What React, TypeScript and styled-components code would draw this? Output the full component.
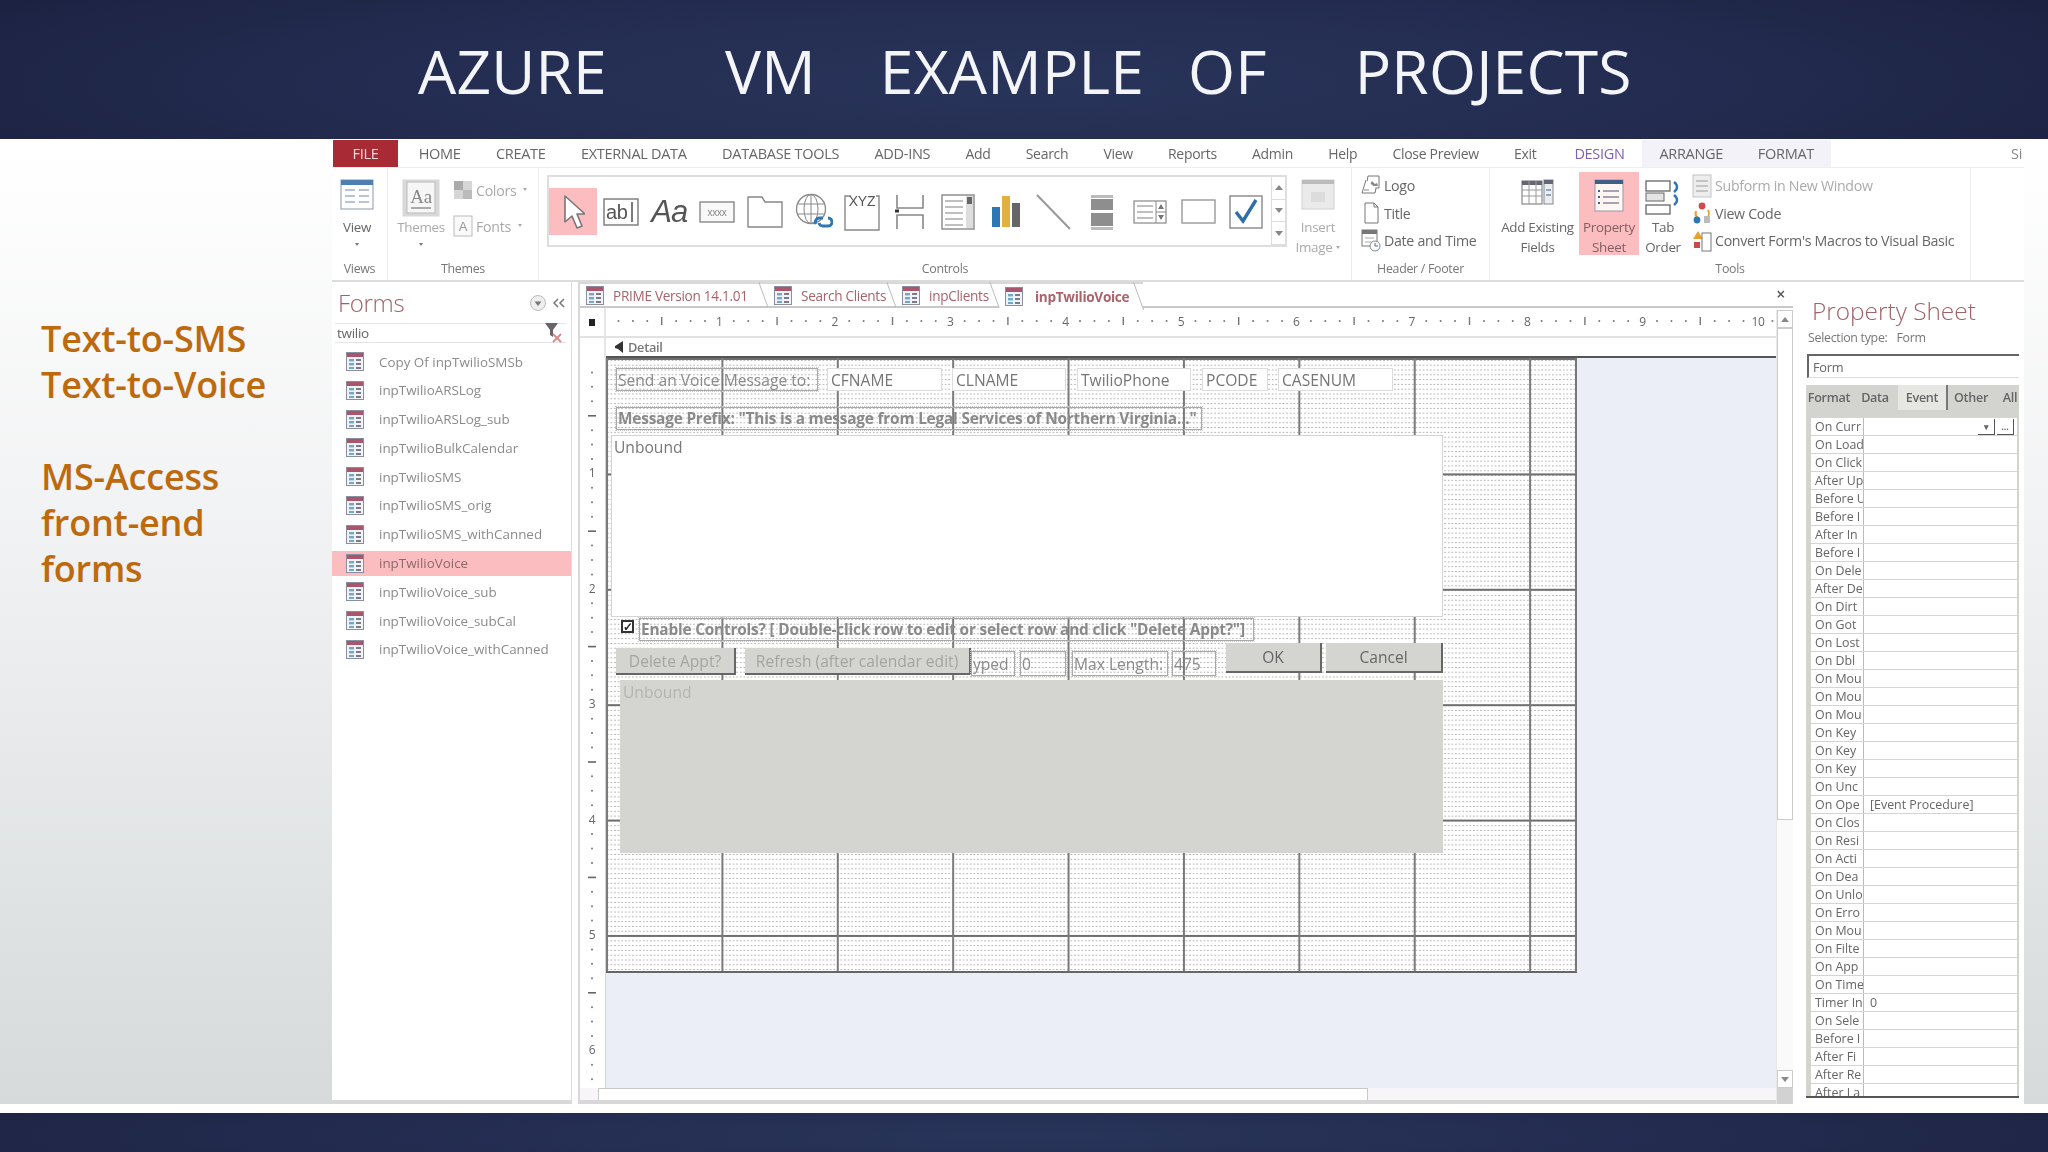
import React from 'react';
import styled, { createGlobalStyle } from 'styled-components';

const Global = createGlobalStyle`
  html, body { margin: 0; padding: 0; }
  body { width: 2048px; height: 1152px; overflow: hidden; background: #fff; font-family: "Open Sans", "Liberation Sans", sans-serif; }
`;

const Page = styled.div`
  width: 2048px;
  height: 1152px;
  display: flex;
  flex-direction: column;
`;

const TitleBar = styled.div`
  height: 139px;
  flex: none;
  display: flex;
  align-items: center;
  padding: 3px 0 0 418px;
  box-sizing: border-box;
  background: radial-gradient(ellipse 60% 120% at 50% 60%, #29345a 0%, #232c50 55%, #1b2140 100%);
  color: #f4f5f8;
  font-size: 60.5px;
  letter-spacing: 0.2px;
  line-height: 1;
`;

const Word = styled.span<{ $gap: number }>`
  margin-right: ${p => p.$gap}px;
`;

const Middle = styled.div`
  height: 965px;
  flex: none;
  display: flex;
  background: linear-gradient(180deg, #ffffff 0%, #f1f2f3 40%, #d6dadb 100%);
`;

const SideText = styled.div`
  width: 332px;
  flex: none;
  box-sizing: border-box;
  padding: 177px 0 0 41px;
  color: #bd6a0e;
  font-size: 36px;
  font-weight: 600;
  line-height: 46px;
  letter-spacing: -0.2px;
`;

const SideGap = styled.div`
  height: 46px;
`;

const AppWindow = styled.div`
  width: 1692px;
  flex: none;
  display: flex;
  flex-direction: column;
  background: #fff;
  color: #666;
  filter: blur(0.7px);
  letter-spacing: -0.3px;
`;

const MenuBar = styled.div`
  height: 29px;
  flex: none;
  display: flex;
  align-items: flex-end;
  box-sizing: border-box;
  padding-left: 1px;
  font-size: 14.5px;
  border-bottom: 1px solid #eee;
`;

const FileTab = styled.div`
  width: 65px;
  height: 27px;
  margin-right: 3px;
  background: #a82a34;
  color: #f1d9da;
  display: flex;
  align-items: center;
  justify-content: center;
`;

const MenuItem = styled.div<{ $active?: boolean; $tool?: boolean; $mixed?: boolean }>`
  height: 27px;
  display: flex;
  align-items: center;
  padding: 0 ${p => (p.$mixed ? 17.6 : p.$tool || p.$active ? 17.4 : 17.7)}px;
  margin-left: ${p => (p.$active ? 3 : 0)}px;
  box-sizing: border-box;
  font-size: ${p => (p.$mixed ? 14 : 14.5)}px;
  color: ${p => (p.$active ? '#8060b0' : '#666')};
  background: ${p => (p.$tool ? '#f3f2f8' : p.$active ? '#fff' : 'transparent')};
`;

const MenuEdge = styled.div`
  margin-left: auto;
  height: 27px;
  display: flex;
  align-items: center;
  padding-right: 2px;
  color: #888;
`;

const Ribbon = styled.div`
  height: 114px;
  flex: none;
  display: flex;
  border-bottom: 2px solid #dcdcdc;
  box-sizing: border-box;
`;

const RibbonGroup = styled.div<{ $w: number; $plain?: boolean }>`
  width: ${p => p.$w}px;
  flex: none;
  display: flex;
  flex-direction: column;
  box-sizing: border-box;
  border-right: ${p => (p.$plain ? 'none' : '1px solid #ececec')};
`;

const GroupBody = styled.div<{ $pad?: number }>`
  height: 88px;
  flex: none;
  display: flex;
  box-sizing: border-box;
  padding: 4px 0 0 ${p => p.$pad ?? 0}px;
`;

const GroupLabel = styled.div`
  text-align: center;
  font-size: 12.4px;
  line-height: 18px;
  padding-top: 4px;
  color: #777;
`;

const LargeButton = styled.div<{ $w: number; $on?: boolean; $off?: boolean; $ml?: number }>`
  width: ${p => p.$w}px;
  height: 83px;
  flex: none;
  margin-left: ${p => p.$ml ?? 0}px;
  padding-top: 7px;
  box-sizing: border-box;
  display: flex;
  flex-direction: column;
  align-items: center;
  text-align: center;
  font-size: 13.4px;
  line-height: 20px;
  color: ${p => (p.$off ? '#aaa' : p.$on ? '#806064' : '#666')};
  background: ${p => (p.$on ? '#fbbdc0' : 'transparent')};
`;

const LargeIcon = styled.div`
  height: 38px;
  flex: none;
  display: flex;
  justify-content: center;
  align-items: flex-start;
`;

const Caret = styled.div`
  width: 0;
  height: 0;
  margin-top: 6px;
  border: 2.5px solid transparent;
  border-top: 3px solid #777;
`;

const InlineCaret = styled.span`
  display: inline-block;
  width: 0;
  height: 0;
  margin-left: 4px;
  vertical-align: middle;
  border: 2.5px solid transparent;
  border-top: 3px solid #aaa;
`;

const SmallList = styled.div<{ $ml?: number; $pitch: number }>`
  margin-left: ${p => p.$ml ?? 0}px;
  display: flex;
  flex-direction: column;
  > * { height: ${p => p.$pitch}px; }
`;

const SmallRow = styled.div<{ $off?: boolean }>`
  display: flex;
  align-items: center;
  gap: 3px;
  font-size: 14.2px;
  white-space: nowrap;
  color: ${p => (p.$off ? '#aaa' : '#666')};
`;

const Gallery = styled.div`
  width: 740px;
  height: 72px;
  flex: none;
  margin-top: 3px;
  box-sizing: border-box;
  display: flex;
  border: 2px solid #dedede;
  border-right: none;
`;

const GalleryRow = styled.div`
  width: 722px;
  flex: none;
  display: flex;
  padding-top: 11px;
`;

const GalleryCell = styled.div<{ $on?: boolean }>`
  width: 48.1px;
  height: 47px;
  flex: none;
  display: flex;
  align-items: center;
  justify-content: center;
  background: ${p => (p.$on ? '#fbbdc0' : 'transparent')};
`;

const BigAa = styled.span`
  font-family: "Liberation Sans", sans-serif;
  font-style: italic;
  font-size: 31px;
  letter-spacing: -1px;
  color: #555;
`;

const GalleryScroll = styled.div`
  flex: 1;
  display: flex;
  flex-direction: column;
  border-left: 1px solid #ddd;
  border-right: 2px solid #dedede;
`;

const ScrollStep = styled.div<{ $size: number }>`
  flex: ${p => p.$size};
  display: flex;
  align-items: center;
  justify-content: center;
  border-bottom: 1px solid #ddd;
  color: #777;
  font-size: 8px;
`;

const Workspace = styled.div`
  flex: 1;
  display: flex;
  min-height: 0;
`;

const NavPane = styled.div`
  width: 240px;
  flex: none;
  display: flex;
  flex-direction: column;
  box-sizing: border-box;
  border-right: 1px solid #ddd;
  border-bottom: 4px solid #d8d8d8;
`;

const NavHead = styled.div`
  height: 41px;
  flex: none;
  display: flex;
  align-items: center;
  padding-left: 6px;
  gap: 6px;
  color: #a06268;
  font-size: 24px;
  font-weight: 300;
  box-sizing: border-box;
`;

const NavTitle = styled.span`
  flex: 1;
`;

const NavSearch = styled.div`
  height: 20px;
  margin: 0 5px 0 3px;
  flex: none;
  display: flex;
  align-items: center;
  justify-content: space-between;
  padding: 0 2px;
  box-sizing: border-box;
  border-top: 1px solid #e4e4e4;
  border-bottom: 1px solid #e4e4e4;
  font-size: 13.5px;
  color: #666;
`;

const NavList = styled.div`
  margin-top: 6px;
  display: flex;
  flex-direction: column;
  gap: 3.8px;
`;

const NavRow = styled.div<{ $on?: boolean }>`
  height: 25px;
  display: flex;
  align-items: center;
  gap: 15px;
  padding-left: 14px;
  font-size: 13.4px;
  letter-spacing: 0;
  color: ${p => (p.$on ? '#8d6a6c' : '#8b8b8b')};
  background: ${p => (p.$on ? '#fbbdc0' : 'transparent')};
`;

const Splitter = styled.div`
  width: 8px;
  flex: none;
  border-right: 2px solid #d8d8d8;
  box-sizing: border-box;
`;

const DocArea = styled.div`
  width: 1213px;
  flex: none;
  display: flex;
  flex-direction: column;
`;

const TabStrip = styled.div`
  height: 26px;
  flex: none;
  display: flex;
  align-items: stretch;
`;

const DocTab = styled.div<{ $w: number; $on?: boolean }>`
  width: ${p => p.$w}px;
  flex: none;
  position: relative;
  display: flex;
  align-items: center;
  gap: ${p => (p.$on ? 12 : 9)}px;
  padding-left: 6px;
  box-sizing: border-box;
  font-size: 13.6px;
  font-weight: ${p => (p.$on ? 700 : 400)};
  color: #a8636b;
  border-bottom: ${p => (p.$on ? 'none' : '2px solid #c8c8c8')};
  border-top: 2px solid #d8d8d8;
  &::after {
    content: '';
    position: absolute;
    right: 4px;
    top: -2px;
    bottom: -2px;
    border-right: 1px solid #bbb;
    transform: skewX(20deg);
  }
`;

const TabFill = styled.div`
  flex: 1;
  display: flex;
  justify-content: flex-end;
  align-items: center;
  padding-right: 8px;
  border-bottom: 2px solid #c8c8c8;
  color: #555;
  font-size: 16px;
  font-weight: 600;
`;

const DesignWrap = styled.div`
  flex: 1;
  display: flex;
  min-height: 0;
`;

const DesignColumn = styled.div`
  width: 1196px;
  flex: none;
  display: flex;
  flex-direction: column;
`;

const RulerRow = styled.div`
  height: 30px;
  flex: none;
  display: flex;
  border-bottom: 2px solid #e2e2e2;
  box-sizing: border-box;
`;

const Corner = styled.div`
  width: 26px;
  flex: none;
  display: flex;
  align-items: center;
  justify-content: center;
  border-right: 2px solid #e6e6e6;
  box-sizing: border-box;
`;

const CornerMark = styled.div`
  width: 6px;
  height: 7px;
  background: #222;
`;

const DetailRow = styled.div`
  height: 20px;
  flex: none;
  display: flex;
`;

const DetailBar = styled.div`
  flex: 1;
  display: flex;
  align-items: center;
  gap: 4px;
  padding-left: 8px;
  font-size: 12.8px;
  font-weight: 600;
  color: #777;
  border-bottom: 2px solid #555;
`;

const CanvasRow = styled.div`
  flex: 1;
  display: flex;
  min-height: 0;
`;

const VRulerBox = styled.div`
  width: 26px;
  flex: none;
  border-right: 1px solid #d4d4d4;
  box-sizing: border-box;
`;

const Surface = styled.div`
  flex: 1;
  background: #eceef7;
`;

const FormCanvas = styled.div`
  position: relative;
  width: 971px;
  height: 615px;
  box-sizing: border-box;
  border-right: 2px solid #777;
  border-bottom: 2px solid #666;
  background-color: #fff;
  background-image:
    linear-gradient(90deg, #7a7a7a 2px, transparent 2px),
    linear-gradient(180deg, #6e6e6e 1.5px, transparent 1.5px),
    radial-gradient(circle, #b4b4b4 0.75px, transparent 1.05px);
  background-size: 115.4px 100%, 100% 115.4px, 3.6px 4.8px;
  letter-spacing: 0;
`;

const Control = styled.div<{ $x: number; $y: number; $w: number; $h: number }>`
  position: absolute;
  left: ${p => p.$x}px;
  top: ${p => p.$y}px;
  width: ${p => p.$w}px;
  height: ${p => p.$h}px;
  box-sizing: border-box;
  display: flex;
  align-items: center;
  white-space: nowrap;
  font-size: 15.6px;
`;

const LabelBox = styled(Control)<{ $bold?: boolean }>`
  border: 1px solid #a8a8a8;
  outline: 1px dotted #c8c8c8;
  padding-left: 1px;
  color: #8a8a8a;
  font-weight: ${p => (p.$bold ? 700 : 400)};
  font-size: ${p => (p.$bold ? 15.4 : 15.6)}px;
  letter-spacing: ${p => (p.$bold ? -0.2 : 0)}px;
`;

const FieldBox = styled(Control)`
  background: #fff;
  border: 1px solid #dcdcdc;
  padding-left: 3px;
  color: #757575;
`;

const MemoBox = styled(Control)`
  background: #fff;
  border: 1px solid #d4d4d4;
  align-items: flex-start;
  padding: 0 0 0 2px;
  color: #777;
`;

const FormButton = styled(Control)<{ $dim?: boolean }>`
  justify-content: center;
  background: #d4d4d0;
  border-right: 2px solid #666;
  border-bottom: 2px solid #666;
  color: ${p => (p.$dim ? '#a4a4a0' : '#666')};
`;

const Plate = styled(Control)`
  background: #d4d4d0;
  align-items: flex-start;
  padding: 1px 0 0 3px;
  color: #b4b4b0;
`;

const CheckMark = styled(Control)`
  background: #fff;
  border: 2px solid #333;
  color: #222;
  font-size: 12px;
  font-weight: 700;
  justify-content: center;
  line-height: 1;
`;

const HScroll = styled.div`
  height: 12px;
  flex: none;
  display: flex;
  background: #f7f5f7;
  border-bottom: 4px solid #d8d8d8;
`;

const HThumb = styled.div`
  width: 770px;
  margin-left: 18px;
  background: #fff;
  border: 1px solid #c8c8c8;
  border-bottom: none;
  box-sizing: border-box;
`;

const VScroll = styled.div`
  width: 17px;
  flex: none;
  margin-top: 2px;
  display: flex;
  flex-direction: column;
  background: #fbfafb;
  border-left: 1px solid #e8e8e8;
  box-sizing: border-box;
`;

const ScrollBtn = styled.div`
  height: 18px;
  flex: none;
  display: flex;
  align-items: center;
  justify-content: center;
  border: 1px solid #ccc;
  box-sizing: border-box;
  color: #666;
  font-size: 8px;
  background: #fff;
`;

const VThumb = styled.div`
  height: 492px;
  flex: none;
  background: #fff;
  border: 1px solid #ccc;
  box-sizing: border-box;
`;

const VTrack = styled.div`
  flex: 1;
`;

const VCornerFill = styled.div`
  height: 16px;
  flex: none;
  background: #d2d2d2;
`;

const PropPane = styled.div`
  width: 222px;
  margin-left: 4px;
  flex: none;
  display: flex;
  flex-direction: column;
  overflow: hidden;
`;

const PropTitle = styled.div`
  height: 42px;
  flex: none;
  box-sizing: border-box;
  padding: 11px 0 0 15px;
  font-size: 24.4px;
  font-weight: 300;
  line-height: 36px;
  color: #a06268;
  letter-spacing: 0;
`;

const SelectionLine = styled.div`
  height: 26px;
  flex: none;
  display: flex;
  align-items: center;
  gap: 9px;
  padding-left: 11px;
  font-size: 12.4px;
  color: #777;
`;

const PropCombo = styled.div`
  height: 24px;
  margin: 4px 0 0 10px;
  flex: none;
  display: flex;
  align-items: center;
  padding-left: 4px;
  box-sizing: border-box;
  border-top: 2px solid #666;
  border-left: 2px solid #666;
  border-bottom: 1px solid #ddd;
  font-size: 12.8px;
  color: #666;
`;

const PropFrame = styled.div`
  margin: 7px 0 6px 9px;
  flex: 1;
  min-height: 0;
  display: flex;
  flex-direction: column;
  background: #d3d3cf;
  border-bottom: 2px solid #555;
`;

const PropTabs = styled.div`
  height: 25px;
  flex: none;
  display: flex;
  align-items: center;
  font-size: 12.6px;
  font-weight: 600;
  color: #666;
`;

const PropTab = styled.div<{ $w: number; $on?: boolean }>`
  width: ${p => p.$w}px;
  height: 25px;
  flex: none;
  display: flex;
  align-items: center;
  justify-content: center;
  background: ${p => (p.$on ? '#e6e6e2' : 'transparent')};
  border-right: ${p => (p.$on ? '2px solid #777' : 'none')};
  box-sizing: border-box;
`;

const PropGrid = styled.div`
  margin: 8px 2px 0 5px;
  flex: 1;
  min-height: 0;
  overflow: hidden;
  background: #fff;
`;

const PropRow = styled.div`
  height: 18px;
  display: grid;
  grid-template-columns: 53px 1fr;
  box-sizing: border-box;
  border-bottom: 1px solid #d4d4d4;
  font-size: 12.4px;
  line-height: 17px;
  letter-spacing: 0;
  color: #666;
`;

const PropName = styled.div`
  overflow: hidden;
  white-space: nowrap;
  padding-left: 4px;
  border-right: 1px solid #bbb;
`;

const PropValue = styled.div`
  display: flex;
  align-items: center;
  justify-content: space-between;
  padding-left: 6px;
`;

const ValueButtons = styled.div`
  display: flex;
  gap: 2px;
  margin-right: 3px;
  font-size: 9px;
  line-height: 15px;
  font-weight: 700;
`;

const ValueButton = styled.span`
  width: 16px;
  text-align: center;
  border-right: 1px solid #555;
  border-bottom: 1px solid #555;
`;

const BottomStrip = styled.div`
  height: 9px;
  flex: none;
  background: #fff;
`;

const FooterBar = styled.div`
  flex: 1;
  background: radial-gradient(ellipse 60% 200% at 50% 60%, #29345a 0%, #222b4e 60%, #1d2241 100%);
`;

const ChevronUp = () => (
  <svg width="8" height="5" viewBox="0 0 8 5"><path d="M0 5 4 0l4 5z" fill="#888" /></svg>
);
const ChevronDown = () => (
  <svg width="8" height="5" viewBox="0 0 8 5"><path d="M0 0h8L4 5z" fill="#888" /></svg>
);

const ViewIcon = () => (
  <svg width="34" height="31" viewBox="0 0 34 31">
    <rect x="1" y="1" width="32" height="29" fill="#fff" stroke="#8a97a6" />
    <rect x="1" y="1" width="32" height="5" fill="#4f7fb0" />
    <path d="M5 11h10M19 11h10M5 17h10M19 17h10M5 23h10M19 23h10" stroke="#b8c4cf" strokeWidth="2" />
  </svg>
);

const ThemesIcon = () => (
  <svg width="38" height="38" viewBox="0 0 38 38">
    <rect x="0.5" y="0.5" width="37" height="37" fill="#d8d8d8" />
    <rect x="5" y="3" width="28" height="31" fill="#f6f6f6" stroke="#bbb" />
    <text x="19" y="24" textAnchor="middle" fontSize="19" fontFamily="Liberation Serif, serif" fill="#888">Aa</text>
    <path d="M9 29h20" stroke="#aaa" strokeWidth="2" />
  </svg>
);

const SwatchIcon = () => (
  <svg width="20" height="20" viewBox="0 0 20 20">
    <rect x="1" y="1" width="18" height="18" fill="#d6d6d6" />
    <rect x="1" y="1" width="9" height="9" fill="#aaa" />
    <rect x="10" y="10" width="9" height="9" fill="#bbb" />
  </svg>
);

const FontsIcon = () => (
  <svg width="20" height="22" viewBox="0 0 20 22">
    <rect x="1" y="1" width="18" height="20" fill="#fafafa" stroke="#bbb" />
    <text x="10" y="16" textAnchor="middle" fontSize="13" fontFamily="Liberation Sans, sans-serif" fill="#999">A</text>
  </svg>
);

const PointerIcon = () => (
  <svg width="24" height="36" viewBox="0 0 24 36">
    <path d="M4 2v26l7-6 5 12 5-2-5-12h8z" fill="#fff" stroke="#777" strokeWidth="1.6" strokeLinejoin="round" />
  </svg>
);

const TextBoxIcon = () => (
  <svg width="36" height="28" viewBox="0 0 36 28">
    <rect x="1" y="1" width="34" height="26" fill="#fff" stroke="#777" strokeWidth="1.4" />
    <text x="3" y="21" fontSize="20" fontFamily="Liberation Sans, sans-serif" fill="#555">ab</text>
    <path d="M29 4v20" stroke="#444" strokeWidth="1.4" />
  </svg>
);

const ButtonIcon = () => (
  <svg width="36" height="22" viewBox="0 0 36 22">
    <rect x="1" y="1" width="34" height="20" fill="#f8f8f8" stroke="#888" strokeWidth="1.4" />
    <text x="18" y="15" textAnchor="middle" fontSize="10" fontFamily="Liberation Sans, sans-serif" fill="#888">xxxx</text>
  </svg>
);

const FolderIcon = () => (
  <svg width="36" height="33" viewBox="0 0 36 33">
    <path d="M1 32V2h14l3 5h17v25z" fill="#fff" stroke="#888" strokeWidth="1.4" />
    <path d="M15 2l3 5" stroke="#888" />
  </svg>
);

const GlobeIcon = () => (
  <svg width="38" height="38" viewBox="0 0 38 38">
    <circle cx="16" cy="16" r="14.5" fill="#fff" stroke="#888" strokeWidth="1.3" />
    <ellipse cx="16" cy="16" rx="7" ry="14.5" fill="none" stroke="#888" />
    <path d="M16 1.5v29M2 11h28M2 21h28" stroke="#888" />
    <path d="M21 31a4 4 0 0 1 4-6h3M33 25a4 4 0 0 1 0 8h-5a4 4 0 0 1-4-3" fill="none" stroke="#2f76b5" strokeWidth="3" />
  </svg>
);

const FrameIcon = () => (
  <svg width="36" height="38" viewBox="0 0 36 38">
    <path d="M7 3H1v34h34V3h-3" fill="#fff" stroke="#888" strokeWidth="1.4" />
    <text x="18" y="13" textAnchor="middle" fontSize="14" fontFamily="Liberation Sans, sans-serif" fill="#555">XYZ</text>
  </svg>
);

const PageBreakIcon = () => (
  <svg width="30" height="36" viewBox="0 0 30 36">
    <path d="M2 1v13h26V1M2 35V21h26v14" fill="none" stroke="#888" strokeWidth="1.6" />
    <path d="M0 17h4" stroke="#333" strokeWidth="3" />
  </svg>
);

const SubformIcon = () => (
  <svg width="34" height="36" viewBox="0 0 34 36">
    <rect x="1" y="1" width="32" height="34" fill="#fff" stroke="#888" strokeWidth="1.4" />
    <rect x="25" y="2" width="7" height="32" fill="#ddd" />
    <rect x="26" y="3" width="5" height="7" fill="#666" />
    <path d="M4 7h18M4 13h18M4 19h18M4 25h18M4 31h18" stroke="#aaa" strokeWidth="1.5" />
  </svg>
);

const ChartIcon = () => (
  <svg width="30" height="33" viewBox="0 0 30 33">
    <rect x="1" y="12" width="8" height="20" fill="#2f76b5" />
    <rect x="11" y="1" width="8" height="31" fill="#e0b040" />
    <rect x="21" y="8" width="8" height="24" fill="#666" />
  </svg>
);

const LineIcon = () => (
  <svg width="36" height="36" viewBox="0 0 36 36"><path d="M1 1l33 34" stroke="#999" strokeWidth="2" /></svg>
);

const DividerIcon = () => (
  <svg width="24" height="36" viewBox="0 0 24 36">
    <rect x="1" y="1" width="22" height="3" fill="#bbb" />
    <rect x="1" y="5" width="22" height="11" fill="#8e8e8e" />
    <rect x="1" y="19" width="22" height="13" fill="#8e8e8e" />
    <rect x="1" y="33" width="22" height="3" fill="#bbb" />
  </svg>
);

const ListIcon = () => (
  <svg width="34" height="24" viewBox="0 0 34 24">
    <rect x="1" y="1" width="32" height="22" fill="#fff" stroke="#888" strokeWidth="1.2" />
    <path d="M4 6h16M4 12h16M4 18h16" stroke="#aaa" strokeWidth="1.5" />
    <path d="M23 1v22M23 12h10" stroke="#888" />
    <path d="M25 9l3-5 3 5zM25 15l3 5 3-5z" fill="#777" />
  </svg>
);

const RectIcon = () => (
  <svg width="35" height="25" viewBox="0 0 35 25"><rect x="1" y="1" width="33" height="23" fill="#fff" stroke="#999" strokeWidth="1.4" /></svg>
);

const CheckIcon = () => (
  <svg width="34" height="34" viewBox="0 0 34 34">
    <rect x="1" y="1" width="32" height="32" fill="#fff" stroke="#888" strokeWidth="1.4" />
    <path d="M7 17l7 9L27 5" fill="none" stroke="#2f6fa8" strokeWidth="3.4" />
  </svg>
);

const InsertImageIcon = () => (
  <svg width="34" height="31" viewBox="0 0 34 31">
    <rect x="1" y="1" width="32" height="29" fill="#eaeaea" stroke="#d0d0d0" />
    <rect x="1" y="1" width="32" height="4" fill="#bbb" />
    <rect x="10" y="13" width="14" height="10" fill="#dcdcdc" />
  </svg>
);

const LogoIcon = () => (
  <svg width="20" height="22" viewBox="0 0 20 22">
    <path d="M7 1h11v12H5z" fill="#fff" stroke="#777" />
    <path d="M8 11l3-5 3 3 2-1 1 3z" fill="#888" />
    <path d="M5 5 1 18h13l1-5" fill="#fff" stroke="#777" />
    <path d="M3 15h5" stroke="#888" />
  </svg>
);

const TitleIcon = () => (
  <svg width="20" height="22" viewBox="0 0 20 22">
    <path d="M4 1h9l4 4v16H4z" fill="#fff" stroke="#777" />
    <path d="M13 1v4h4" fill="none" stroke="#777" />
  </svg>
);

const DateIcon = () => (
  <svg width="20" height="24" viewBox="0 0 20 24">
    <rect x="1" y="1" width="15" height="16" fill="#fff" stroke="#777" />
    <rect x="1" y="1" width="15" height="4" fill="#777" />
    <path d="M4 9h9M4 13h9" stroke="#aaa" />
    <circle cx="14" cy="17" r="5" fill="#fff" stroke="#888" />
    <path d="M14 14v3h3" fill="none" stroke="#2f76b5" />
  </svg>
);

const FieldsIcon = () => (
  <svg width="33" height="26" viewBox="0 0 33 26">
    <rect x="1" y="2" width="20" height="23" fill="#fff" stroke="#888" strokeWidth="1.2" />
    <rect x="1" y="2" width="20" height="4" fill="#667" />
    <path d="M8 2v23M15 2v23M1 11h20M1 17h20" stroke="#999" />
    <rect x="23" y="1" width="9" height="24" fill="#e8eef4" stroke="#888" />
    <rect x="23" y="1" width="9" height="4" fill="#667" />
    <path d="M25 11h5M25 16h5" stroke="#7a8fa5" strokeWidth="1.5" />
  </svg>
);

const PropertyIcon = () => (
  <svg width="30" height="33" viewBox="0 0 30 33">
    <rect x="1" y="1" width="28" height="31" fill="#fdf6f2" stroke="#99a" />
    <rect x="1" y="1" width="28" height="4" fill="#3d5f8a" />
    <path d="M9 12h16M9 18h16M9 24h16" stroke="#889" strokeWidth="1.4" />
    <path d="M4 12h2M4 18h2M4 24h2" stroke="#3d5f8a" strokeWidth="2" />
  </svg>
);

const TabOrderIcon = () => (
  <svg width="36" height="36" viewBox="0 0 36 36">
    <rect x="1" y="2" width="24" height="10" fill="#fff" stroke="#666" strokeWidth="1.3" />
    <rect x="1" y="14" width="18" height="8" fill="#e4e4e4" stroke="#666" />
    <rect x="1" y="26" width="24" height="9" fill="#fff" stroke="#666" strokeWidth="1.3" />
    <path d="M29 3c4 3 4 7 0 10M29 16c4 3 4 7 0 10" fill="none" stroke="#2f76b5" strokeWidth="2.4" />
  </svg>
);

const SubformWinIcon = () => (
  <svg width="20" height="24" viewBox="0 0 20 24">
    <rect x="1" y="1" width="18" height="22" fill="#ededed" stroke="#c4c4c4" />
    <path d="M4 7h12M4 12h12M4 17h12" stroke="#c4c4c4" strokeWidth="2" />
  </svg>
);

const CodeIcon = () => (
  <svg width="20" height="24" viewBox="0 0 20 24">
    <circle cx="10" cy="5" r="3.4" fill="#d24a4a" />
    <path d="M4 10a7 7 0 0 0 3 8M16 9a7 7 0 0 1-2 9" fill="none" stroke="#e8a030" strokeWidth="2" />
    <circle cx="5" cy="19" r="3.4" fill="#2f76b5" />
    <rect x="12" y="15" width="6" height="7" fill="#bbb" />
  </svg>
);

const ConvertIcon = () => (
  <svg width="20" height="24" viewBox="0 0 20 24">
    <path d="M1 10l5-8 5 8z" fill="#e8a030" />
    <rect x="10" y="4" width="9" height="18" fill="#fff" stroke="#777" />
    <rect x="2" y="13" width="6" height="6" fill="#c94a4a" />
  </svg>
);

const NavMenuIcon = () => (
  <svg width="18" height="18" viewBox="0 0 18 18">
    <circle cx="9" cy="9" r="7.5" fill="#eee" stroke="#bbb" />
    <path d="M5.5 7.5h7L9 12z" fill="#777" />
  </svg>
);

const CollapseIcon = () => (
  <svg width="12" height="10" viewBox="0 0 12 10">
    <path d="M5 1 1 5l4 4M11 1 7 5l4 4" fill="none" stroke="#777" strokeWidth="1.5" />
  </svg>
);

const FilterClearIcon = () => (
  <svg width="20" height="22" viewBox="0 0 20 22">
    <path d="M1 1h13L9 8v7L6 13V8z" fill="#666" />
    <path d="M9 12l8 8M17 12l-8 8" stroke="#d88" strokeWidth="1.8" />
  </svg>
);

const FormIcon = () => (
  <svg width="18" height="19" viewBox="0 0 18 19">
    <rect x="0.5" y="0.5" width="17" height="18" fill="#f0f2f6" stroke="#8a8ea0" />
    <rect x="1" y="1" width="16" height="4" fill="#a8566c" />
    <rect x="3" y="7" width="5" height="2.4" fill="#6fa8c8" />
    <rect x="3" y="11" width="5" height="2.4" fill="#6fa8c8" />
    <rect x="3" y="15" width="5" height="2" fill="#6fa8c8" />
    <path d="M10 8h5M10 12h5M10 16h5" stroke="#556" strokeWidth="1.4" />
  </svg>
);

const SectionMark = () => (
  <svg width="10" height="12" viewBox="0 0 10 12"><path d="M9 0 1 5v2l3 1 5 4z" fill="#333" /></svg>
);

const INCH = 115.4;

const HRuler = () => {
  const ticks = Array.from({ length: 83 }, (_, i) => i + 1);
  return (
    <svg width="1170" height="28" viewBox="0 0 1170 28">
      {ticks.map(i => {
        const x = -2 + (i * INCH) / 8;
        if (i % 8 === 0) {
          return (
            <text key={i} x={x} y="18" textAnchor="middle" fontSize="12" fontFamily="Open Sans, sans-serif" fill="#666">
              {i / 8}
            </text>
          );
        }
        if (i % 4 === 0) return <rect key={i} x={x - 0.7} y="9" width="1.4" height="8" fill="#777" />;
        return <circle key={i} cx={x} cy="13" r="1" fill="#777" />;
      })}
    </svg>
  );
};

const VRuler = () => {
  const ticks = Array.from({ length: 50 }, (_, i) => i + 1);
  return (
    <svg width="25" height="730" viewBox="0 0 25 730">
      {ticks.map(i => {
        const y = (i * INCH) / 8;
        if (i % 8 === 0) {
          return (
            <text key={i} x="12" y={y + 4} textAnchor="middle" fontSize="12" fontFamily="Open Sans, sans-serif" fill="#666">
              {i / 8}
            </text>
          );
        }
        if (i % 4 === 0) return <rect key={i} x="8" y={y - 0.7} width="8" height="1.6" fill="#666" />;
        return <circle key={i} cx="12" cy={y} r="1" fill="#777" />;
      })}
    </svg>
  );
};

const MENU_CAPS = ['HOME', 'CREATE', 'EXTERNAL DATA', 'DATABASE TOOLS', 'ADD-INS'];
const MENU_MIXED = ['Add', 'Search', 'View', 'Reports', 'Admin', 'Help', 'Close Preview', 'Exit'];

const FORMS = [
  'Copy Of inpTwilioSMSb',
  'inpTwilioARSLog',
  'inpTwilioARSLog_sub',
  'inpTwilioBulkCalendar',
  'inpTwilioSMS',
  'inpTwilioSMS_orig',
  'inpTwilioSMS_withCanned',
  'inpTwilioVoice',
  'inpTwilioVoice_sub',
  'inpTwilioVoice_subCal',
  'inpTwilioVoice_withCanned',
];

const GALLERY = [PointerIcon, TextBoxIcon, null, ButtonIcon, FolderIcon, GlobeIcon, FrameIcon, PageBreakIcon, SubformIcon, ChartIcon, LineIcon, DividerIcon, ListIcon, RectIcon, CheckIcon];

const PROPS = ['On Curr', 'On Load', 'On Click', 'After Up', 'Before U', 'Before I', 'After In', 'Before I', 'On Dele', 'After De', 'On Dirt', 'On Got', 'On Lost', 'On Dbl', 'On Mou', 'On Mou', 'On Mou', 'On Key', 'On Key', 'On Key', 'On Unc', 'On Ope', 'On Clos', 'On Resi', 'On Acti', 'On Dea', 'On Unlo', 'On Erro', 'On Mou', 'On Filte', 'On App', 'On Time', 'Timer In', 'On Sele', 'Before I', 'After Fi', 'After Re', 'After La'];

export default function App() {
  return (
    <Page>
      <Global />
      <TitleBar>
        <Word $gap={118}>AZURE</Word>
        <Word $gap={64}>VM</Word>
        <Word $gap={44}>EXAMPLE</Word>
        <Word $gap={88}>OF</Word>
        <Word $gap={0}>PROJECTS</Word>
      </TitleBar>

      <Middle>
        <SideText>
          <div>Text-to-SMS</div>
          <div>Text-to-Voice</div>
          <SideGap />
          <div>MS-Access</div>
          <div>front-end</div>
          <div>forms</div>
        </SideText>

        <AppWindow>
          <MenuBar>
            <FileTab>FILE</FileTab>
            {MENU_CAPS.map(m => (
              <MenuItem key={m}>{m}</MenuItem>
            ))}
            {MENU_MIXED.map(m => (
              <MenuItem key={m} $mixed>{m}</MenuItem>
            ))}
            <MenuItem $active>DESIGN</MenuItem>
            <MenuItem $tool>ARRANGE</MenuItem>
            <MenuItem $tool>FORMAT</MenuItem>
            <MenuEdge>Si</MenuEdge>
          </MenuBar>

          <Ribbon>
            <RibbonGroup $w={56}>
              <GroupBody>
                <LargeButton $w={50}>
                  <LargeIcon><ViewIcon /></LargeIcon>
                  View
                  <Caret />
                </LargeButton>
              </GroupBody>
              <GroupLabel>Views</GroupLabel>
            </RibbonGroup>

            <RibbonGroup $w={151}>
              <GroupBody $pad={6}>
                <LargeButton $w={54} $off>
                  <LargeIcon><ThemesIcon /></LargeIcon>
                  Themes
                  <Caret />
                </LargeButton>
                <SmallList $ml={5} $pitch={36}>
                  <SmallRow $off><SwatchIcon />Colors<InlineCaret /></SmallRow>
                  <SmallRow $off><FontsIcon />Fonts<InlineCaret /></SmallRow>
                </SmallList>
              </GroupBody>
              <GroupLabel>Themes</GroupLabel>
            </RibbonGroup>

            <RibbonGroup $w={813}>
              <GroupBody $pad={8}>
                <Gallery>
                  <GalleryRow>
                    {GALLERY.map((Icon, i) => (
                      <GalleryCell key={i} $on={i === 0}>
                        {Icon ? <Icon /> : <BigAa>Aa</BigAa>}
                      </GalleryCell>
                    ))}
                  </GalleryRow>
                  <GalleryScroll>
                    <ScrollStep $size={1}><ChevronUp /></ScrollStep>
                    <ScrollStep $size={1}><ChevronDown /></ScrollStep>
                    <ScrollStep $size={1}><ChevronDown /></ScrollStep>
                  </GalleryScroll>
                </Gallery>
                <LargeButton $w={48} $ml={7} $off>
                  <LargeIcon><InsertImageIcon /></LargeIcon>
                  Insert
                  <div>Image<InlineCaret /></div>
                </LargeButton>
              </GroupBody>
              <GroupLabel>Controls</GroupLabel>
            </RibbonGroup>

            <RibbonGroup $w={138}>
              <GroupBody $pad={9}>
                <SmallList $pitch={27.5}>
                  <SmallRow><LogoIcon />Logo</SmallRow>
                  <SmallRow><TitleIcon />Title</SmallRow>
                  <SmallRow><DateIcon />Date and Time</SmallRow>
                </SmallList>
              </GroupBody>
              <GroupLabel>Header / Footer</GroupLabel>
            </RibbonGroup>

            <RibbonGroup $w={481}>
              <GroupBody $pad={6}>
                <LargeButton $w={83}>
                  <LargeIcon><FieldsIcon /></LargeIcon>
                  Add Existing
                  <div>Fields</div>
                </LargeButton>
                <LargeButton $w={60} $on>
                  <LargeIcon><PropertyIcon /></LargeIcon>
                  Property
                  <div>Sheet</div>
                </LargeButton>
                <LargeButton $w={48}>
                  <LargeIcon><TabOrderIcon /></LargeIcon>
                  Tab
                  <div>Order</div>
                </LargeButton>
                <SmallList $ml={5} $pitch={27.5}>
                  <SmallRow $off><SubformWinIcon />Subform in New Window</SmallRow>
                  <SmallRow><CodeIcon />View Code</SmallRow>
                  <SmallRow><ConvertIcon />Convert Form's Macros to Visual Basic</SmallRow>
                </SmallList>
              </GroupBody>
              <GroupLabel>Tools</GroupLabel>
            </RibbonGroup>
          </Ribbon>

          <Workspace>
            <NavPane>
              <NavHead>
                <NavTitle>Forms</NavTitle>
                <NavMenuIcon />
                <CollapseIcon />
                <span />
              </NavHead>
              <NavSearch>
                twilio
                <FilterClearIcon />
              </NavSearch>
              <NavList>
                {FORMS.map(f => (
                  <NavRow key={f} $on={f === 'inpTwilioVoice'}>
                    <FormIcon />
                    {f}
                  </NavRow>
                ))}
              </NavList>
            </NavPane>
            <Splitter />

            <DocArea>
              <TabStrip>
                <DocTab $w={188}><FormIcon />PRIME Version 14.1.01</DocTab>
                <DocTab $w={128}><FormIcon />Search Clients</DocTab>
                <DocTab $w={103}><FormIcon />inpClients</DocTab>
                <DocTab $w={144} $on><FormIcon />inpTwilioVoice</DocTab>
                <TabFill>×</TabFill>
              </TabStrip>

              <DesignWrap>
                <DesignColumn>
                  <RulerRow>
                    <Corner><CornerMark /></Corner>
                    <HRuler />
                  </RulerRow>
                  <DetailRow>
                    <Corner />
                    <DetailBar><SectionMark />Detail</DetailBar>
                  </DetailRow>
                  <CanvasRow>
                    <VRulerBox><VRuler /></VRulerBox>
                    <Surface>
                      <FormCanvas>
                        <LabelBox $x={10} $y={10} $w={202} $h={23}>Send an Voice Message to:</LabelBox>
                        <FieldBox $x={221} $y={10} $w={115} $h={23}>CFNAME</FieldBox>
                        <FieldBox $x={346} $y={10} $w={114} $h={23}>CLNAME</FieldBox>
                        <FieldBox $x={471} $y={10} $w={114} $h={23}>TwilioPhone</FieldBox>
                        <FieldBox $x={596} $y={10} $w={66} $h={23}>PCODE</FieldBox>
                        <FieldBox $x={672} $y={10} $w={115} $h={23}>CASENUM</FieldBox>
                        <LabelBox $x={10} $y={49} $w={586} $h={23} $bold>Message Prefix: "This is a message from Legal Services of Northern Virginia..."</LabelBox>
                        <MemoBox $x={5} $y={77} $w={832} $h={182}>Unbound</MemoBox>
                        <CheckMark $x={15} $y={262} $w={13} $h={13}>✓</CheckMark>
                        <LabelBox $x={33} $y={260} $w={615} $h={23} $bold>Enable Controls? [ Double-click row to edit or select row and click "Delete Appt?"]</LabelBox>
                        <FormButton $x={10} $y={290} $w={120} $h={27} $dim>Delete Appt?</FormButton>
                        <FormButton $x={139} $y={290} $w={226} $h={27} $dim>Refresh (after calendar edit)</FormButton>
                        <LabelBox $x={365} $y={293} $w={44} $h={25}>yped</LabelBox>
                        <LabelBox $x={414} $y={293} $w={46} $h={25}>0</LabelBox>
                        <LabelBox $x={466} $y={293} $w={96} $h={25}>Max Length:</LabelBox>
                        <LabelBox $x={566} $y={293} $w={44} $h={25}>475</LabelBox>
                        <FormButton $x={620} $y={285} $w={96} $h={30}>OK</FormButton>
                        <FormButton $x={720} $y={285} $w={117} $h={30}>Cancel</FormButton>
                        <Plate $x={14} $y={322} $w={823} $h={173}>Unbound</Plate>
                      </FormCanvas>
                    </Surface>
                  </CanvasRow>
                  <HScroll><HThumb /></HScroll>
                </DesignColumn>
                <VScroll>
                  <ScrollBtn><ChevronUp /></ScrollBtn>
                  <VThumb />
                  <VTrack />
                  <ScrollBtn><ChevronDown /></ScrollBtn>
                  <VCornerFill />
                </VScroll>
              </DesignWrap>
            </DocArea>

            <PropPane>
              <PropTitle>Property Sheet</PropTitle>
              <SelectionLine><span>Selection type:</span><span>Form</span></SelectionLine>
              <PropCombo>Form</PropCombo>
              <PropFrame>
                <PropTabs>
                  <PropTab $w={46}>Format</PropTab>
                  <PropTab $w={46}>Data</PropTab>
                  <PropTab $w={50} $on>Event</PropTab>
                  <PropTab $w={46}>Other</PropTab>
                  <PropTab $w={32}>All</PropTab>
                </PropTabs>
                <PropGrid>
                  {PROPS.map((name, i) => (
                    <PropRow key={i}>
                      <PropName>{name}</PropName>
                      <PropValue>
                        {name === 'On Ope' && '[Event Procedure]'}
                        {name === 'Timer In' && '0'}
                        {i === 0 && (
                          <>
                            <span />
                            <ValueButtons>
                              <ValueButton>▾</ValueButton>
                              <ValueButton>...</ValueButton>
                            </ValueButtons>
                          </>
                        )}
                      </PropValue>
                    </PropRow>
                  ))}
                </PropGrid>
              </PropFrame>
            </PropPane>
          </Workspace>
        </AppWindow>
      </Middle>

      <BottomStrip />
      <FooterBar />
    </Page>
  );
}
